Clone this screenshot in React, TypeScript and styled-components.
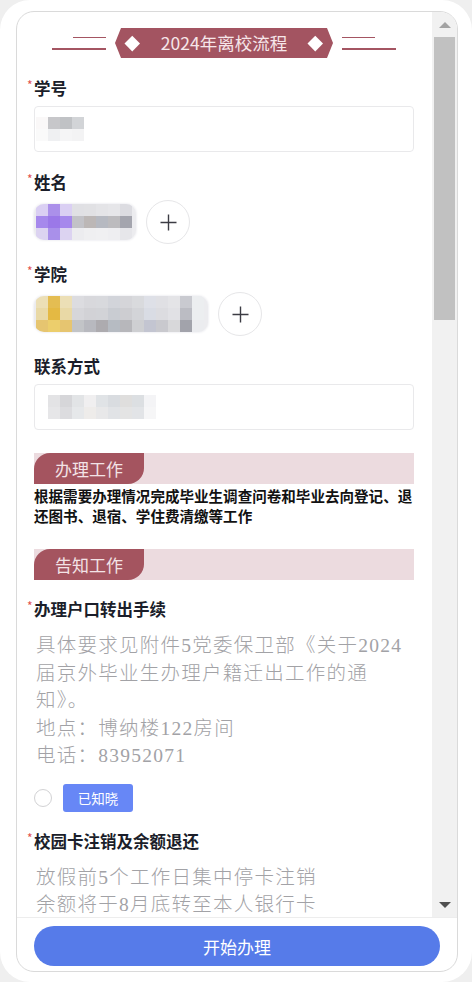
import React from "react";
import styled, { createGlobalStyle } from "styled-components";

const GlobalStyle = createGlobalStyle`
  * { box-sizing: border-box; }
  html, body {
    margin: 0;
    padding: 0;
    height: 100%;
    overflow: hidden;
    background: #efefef;
  }
  body {
    font-family: "Noto Sans CJK SC", "Noto Sans", sans-serif;
    color: #1c1f2b;
  }
  #root { height: 100%; }
`;

const Shell = styled.div`
  height: 100vh;
  background: #fff;
  border-radius: 30px;
  padding: 11px 14px 10px 16px;
  display: flex;
`;

const Phone = styled.div`
  flex: 1;
  display: flex;
  flex-direction: column;
  border: 1px solid #dadada;
  border-radius: 18px;
  overflow: hidden;
  background: #fff;
`;

const Viewport = styled.div`
  flex: 1;
  min-height: 0;
  display: flex;
`;

const Scroll = styled.div`
  flex: 1;
  min-width: 0;
  overflow: hidden;
  padding: 16px 18px 0 17px;
`;

/* classic scrollbar, drawn as a column beside the page */
const ScrollBar = styled.div`
  width: 25px;
  flex-shrink: 0;
  background: #f1f1f1;
  display: flex;
  flex-direction: column;
`;

const ScrollButton = styled.div<{ $down?: boolean }>`
  height: 24px;
  display: flex;
  justify-content: center;
  align-items: flex-start;
  padding-top: ${(p) => (p.$down ? 9 : 10)}px;
`;

const ScrollTrack = styled.div`
  flex: 1;
  padding: 1px 2px 0 2px;
`;

const Thumb = styled.div`
  height: 283px;
  background: #c1c1c1;
`;

/* ---------- title banner ---------- */

const BannerRow = styled.div`
  display: flex;
  justify-content: center;
  align-items: center;
  gap: 9px;
`;

const Lines = styled.div<{ $side: "left" | "right" }>`
  display: flex;
  flex-direction: column;
  align-items: ${(p) => (p.$side === "left" ? "flex-end" : "flex-start")};
  gap: 10px;
  width: 54px;
`;

const Rule = styled.span<{ $w: number }>`
  display: block;
  width: ${(p) => p.$w}px;
  height: 1.5px;
  background: #a45562;
`;

const Banner = styled.div`
  width: 218px;
  height: 30px;
  background: #a35461;
  clip-path: polygon(6px 0, calc(100% - 6px) 0, 100% 50%, calc(100% - 6px) 100%, 6px 100%, 0 50%);
  display: flex;
  align-items: center;
  justify-content: space-between;
  padding: 0 12px;
  color: #f6e6e9;
  font-size: 17.5px;
  line-height: 30px;
`;

const Diamond = styled.span`
  width: 10.5px;
  height: 10.5px;
  background: #fff;
  transform: rotate(45deg);
`;

/* ---------- form fields ---------- */

const Field = styled.div`
  margin-top: 20px;
`;

const Label = styled.div<{ $required?: boolean }>`
  position: relative;
  font-size: 16.5px;
  font-weight: 700;
  line-height: 20px;
  color: #1b1e2a;

  &::before {
    content: ${(p) => (p.$required ? '"*"' : "none")};
    position: absolute;
    left: -7px;
    top: 1px;
    font-size: 12px;
    font-weight: 400;
    line-height: 12px;
    color: #e2524f;
  }
`;

const InputBox = styled.div<{ $inset: number }>`
  margin-top: 8px;
  height: 46px;
  border: 1px solid #e9e9eb;
  border-radius: 4px;
  display: flex;
  align-items: center;
  padding-left: ${(p) => p.$inset}px;
`;

const ChipRow = styled.div`
  margin-top: 8px;
  display: flex;
  align-items: center;
  gap: 10px;
`;

const Chip = styled.div`
  padding: 0 4px 0 2px;
  border-radius: 10px;
  background: #ececef;
  box-shadow: 0 0 2px 1px #f1f1f4;
  overflow: hidden;
`;

const Mosaic = styled.div<{ $cols: number }>`
  display: grid;
  grid-template-columns: repeat(${(p) => p.$cols}, 12px);
  grid-auto-rows: 12px;
`;

const Cell = styled.span<{ $c: string }>`
  background: ${(p) => p.$c};
`;

const AddButton = styled.button`
  width: 44px;
  height: 44px;
  border-radius: 50%;
  border: 1px solid #e6e6e8;
  background: #fff;
  display: flex;
  align-items: center;
  justify-content: center;
  padding: 0;
`;

/* ---------- sections ---------- */

const SectionBar = styled.div`
  margin-top: 23px;
  height: 31px;
  background: #ecdbdf;
  display: flex;
`;

const SectionTab = styled.div`
  width: 110px;
  background: #a4545f;
  border-radius: 16px 0 16px 0;
  color: #f3e3e6;
  font-size: 17px;
  line-height: 31px;
  text-align: center;
`;

const Desc = styled.p`
  margin: 2px 0 0;
  font-size: 14.55px;
  font-weight: 700;
  line-height: 20px;
  color: #121212;
`;

const Notice = styled.div`
  margin-top: 19px;
`;

const NoticeBody = styled.div`
  margin-top: 13px;
  padding: 0 6px 0 2px;
  font-family: "Liberation Serif", "Noto Sans CJK SC", serif;
  font-size: 19.5px;
  font-weight: 300;
  letter-spacing: 1.25px;
  line-height: 27.5px;
  color: #a2a2a6;
`;

const AckRow = styled.div`
  margin-top: 14px;
  display: flex;
  align-items: center;
  gap: 11px;
`;

const Radio = styled.span`
  width: 18px;
  height: 18px;
  border-radius: 50%;
  border: 1px solid #d2d2d4;
`;

const AckButton = styled.button`
  width: 70px;
  height: 28px;
  border: none;
  border-radius: 3px;
  background: #6787f6;
  color: #fff;
  font-family: inherit;
  font-size: 13.5px;
  padding: 0;
`;

/* ---------- bottom bar ---------- */

const BottomBar = styled.div`
  flex-shrink: 0;
  border-top: 1px solid #ededed;
  padding: 8px 17px 5px;
`;

const StartButton = styled.button`
  width: 100%;
  height: 40px;
  border: none;
  border-radius: 20px;
  background: #567be9;
  color: #fff;
  font-family: inherit;
  font-size: 17px;
`;

const PlusIcon = () => (
  <svg width="17" height="17" viewBox="0 0 17 17">
    <path d="M8.5 0.5v16M0.5 8.5h16" stroke="#3c3c44" strokeWidth="1.4" fill="none" />
  </svg>
);

const Arrow = ({ down }: { down?: boolean }) => (
  <svg width="12" height="6" viewBox="0 0 12 6">
    {down ? (
      <polygon points="0,0 12,0 6,6" fill="#505050" />
    ) : (
      <polygon points="6,0 12,6 0,6" fill="#a3a3a3" />
    )}
  </svg>
);

const MosaicBlock = ({ rows }: { rows: string[][] }) => (
  <Mosaic $cols={rows[0].length}>
    {rows.flat().map((c, i) => (
      <Cell key={i} $c={c} />
    ))}
  </Mosaic>
);

const idMosaic = [
  ["#faf8f8", "#c7c7ca", "#c0c2c5", "#d2d4d7"],
  ["#fafafa", "#eff0f2", "#f5f5f6", "#f3f3f4"],
];

const nameMosaic = [
  ["#dacff3", "#ab90ea", "#dacff3", "#e0e0e4", "#e1e1e4", "#e4e4e7", "#e6e6e9", "#dcdce1"],
  ["#a688ec", "#9b78e8", "#a688ec", "#c2c2c7", "#bcb7b6", "#b6b9c1", "#bcbbbe", "#a4a5ae"],
  ["#dcd3f1", "#a990ea", "#dcd3f1", "#ececef", "#efeff1", "#f0f0f2", "#eeeef1", "#e6e6ea"],
];

const collegeMosaic = [
  ["#ecdfb6", "#e4bd52", "#ecdfb6", "#dcdce0", "#d8d8dc", "#d8d9dd", "#d2d4da", "#d5d5d9", "#d9dadd", "#dee0e7", "#e0e0e4", "#e4e4e7", "#c9cad0", "#eceef0"],
  ["#e9d9a6", "#e4b943", "#e9d9a6", "#d6d6da", "#d2d2d6", "#d2d3d7", "#c9ccd2", "#cdcdd1", "#d3d4d8", "#d9dce4", "#dcdce0", "#e1e1e5", "#bbbcc3", "#eceef0"],
  ["#e6c570", "#ecce6c", "#e6c570", "#c2c4c7", "#b8b9bf", "#adabaf", "#b6bbc2", "#b7b7bb", "#cecfd2", "#c3c5d1", "#c9c9ce", "#d8d8da", "#a2a3ab", "#ebecef"],
];

const phoneMosaic = [
  ["#e3e3e5", "#d6d6d9", "#e2e4e6", "#f0eff0", "#e0e3e6", "#d9dce0", "#dfdedd", "#dcdfe2", "#f4f4f6"],
  ["#e6e6e8", "#dcdcdf", "#e6e8ea", "#eeecea", "#e8e8e9", "#e1e3e6", "#e4e4e4", "#e2e4e7", "#f6f6f7"],
];

const notices = [
  {
    title: "办理户口转出手续",
    lines: [
      "具体要求见附件5党委保卫部《关于2024届京外毕业生办理户籍迁出工作的通知》。",
      "地点：博纳楼122房间",
      "电话：83952071",
    ],
  },
  {
    title: "校园卡注销及余额退还",
    lines: ["放假前5个工作日集中停卡注销", "余额将于8月底转至本人银行卡"],
  },
];

export default function App() {
  return (
    <>
      <GlobalStyle />
      <Shell>
        <Phone>
          <Viewport>
            <Scroll>
              <BannerRow>
                <Lines $side="left">
                  <Rule $w={33} />
                  <Rule $w={54} />
                </Lines>
                <Banner>
                  <Diamond />
                  <span>2024年离校流程</span>
                  <Diamond />
                </Banner>
                <Lines $side="right">
                  <Rule $w={33} />
                  <Rule $w={54} />
                </Lines>
              </BannerRow>

              <Field>
                <Label $required>学号</Label>
                <InputBox $inset={1}>
                  <MosaicBlock rows={idMosaic} />
                </InputBox>
              </Field>

              <Field>
                <Label $required>姓名</Label>
                <ChipRow>
                  <Chip>
                    <MosaicBlock rows={nameMosaic} />
                  </Chip>
                  <AddButton>
                    <PlusIcon />
                  </AddButton>
                </ChipRow>
              </Field>

              <Field>
                <Label $required>学院</Label>
                <ChipRow>
                  <Chip>
                    <MosaicBlock rows={collegeMosaic} />
                  </Chip>
                  <AddButton>
                    <PlusIcon />
                  </AddButton>
                </ChipRow>
              </Field>

              <Field>
                <Label>联系方式</Label>
                <InputBox $inset={13}>
                  <MosaicBlock rows={phoneMosaic} />
                </InputBox>
              </Field>

              <SectionBar>
                <SectionTab>办理工作</SectionTab>
              </SectionBar>
              <Desc>根据需要办理情况完成毕业生调查问卷和毕业去向登记、退还图书、退宿、学住费清缴等工作</Desc>

              <SectionBar>
                <SectionTab>告知工作</SectionTab>
              </SectionBar>

              {notices.map((n) => (
                <Notice key={n.title}>
                  <Label $required>{n.title}</Label>
                  <NoticeBody>
                    {n.lines.map((l) => (
                      <div key={l}>{l}</div>
                    ))}
                  </NoticeBody>
                  <AckRow>
                    <Radio />
                    <AckButton>已知晓</AckButton>
                  </AckRow>
                </Notice>
              ))}
            </Scroll>
            <ScrollBar>
              <ScrollButton>
                <Arrow />
              </ScrollButton>
              <ScrollTrack>
                <Thumb />
              </ScrollTrack>
              <ScrollButton $down>
                <Arrow down />
              </ScrollButton>
            </ScrollBar>
          </Viewport>
          <BottomBar>
            <StartButton>开始办理</StartButton>
          </BottomBar>
        </Phone>
      </Shell>
    </>
  );
}
